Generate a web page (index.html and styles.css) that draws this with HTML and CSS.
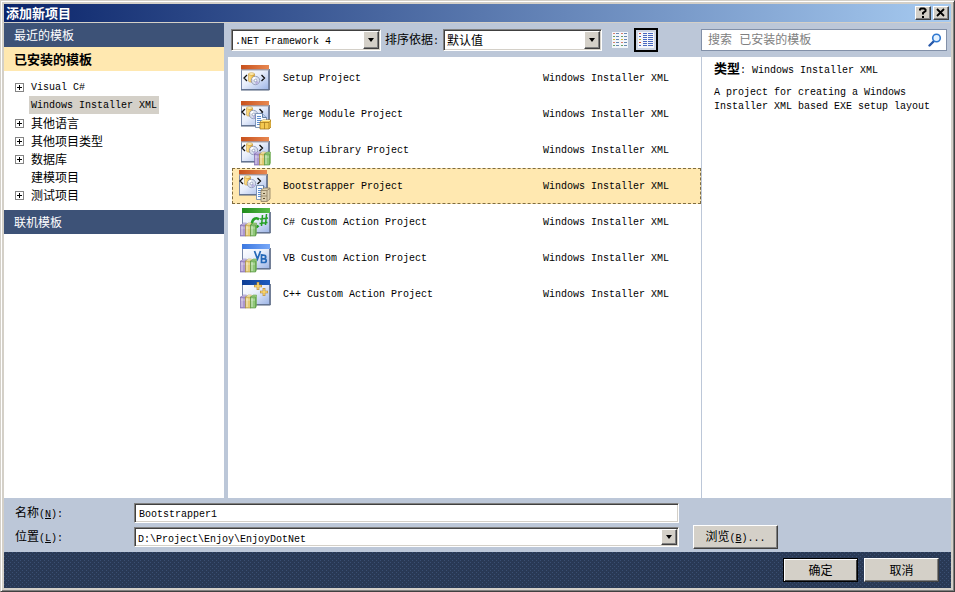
FILE: index.html
```html
<!DOCTYPE html>
<html lang="zh-CN">
<head>
<meta charset="utf-8">
<title>添加新项目</title>
<link rel="stylesheet" href="styles.css">
</head>
<body>
<svg class="defs" aria-hidden="true">
  <defs>
    <linearGradient id="pane" x1="0" y1="0" x2="1" y2="1"><stop offset="0" stop-color="#fff"/><stop offset=".45" stop-color="#e8eefb"/><stop offset="1" stop-color="#9cb4e6"/></linearGradient>
    <linearGradient id="orange"><stop offset="0" stop-color="#c8501c"/><stop offset="1" stop-color="#e88850"/></linearGradient>
    <linearGradient id="green"><stop offset="0" stop-color="#1f8a1c"/><stop offset="1" stop-color="#58bc48"/></linearGradient>
    <linearGradient id="blue"><stop offset="0" stop-color="#3c78e0"/><stop offset="1" stop-color="#78a8f8"/></linearGradient>
    <linearGradient id="navy"><stop offset="0" stop-color="#0c3c94"/><stop offset="1" stop-color="#1c5cc0"/></linearGradient>
    <linearGradient id="gold"><stop offset="0" stop-color="#fce49a"/><stop offset=".6" stop-color="#f4c450"/><stop offset="1" stop-color="#d09828"/></linearGradient>
    <g id="frame">
      <rect x=".5" y="4.500" width="27" height="20" fill="url(#pane)" stroke="#7888a8"/>
      <path d="M0 25h28.300v-21" fill="none" stroke="#50607c"/>
    </g>
    <g id="xml">
      <use href="#frame"/>
      <rect width="28" height="4.500" fill="url(#orange)"/>
      <path d="M0 5h28" stroke="#a4a8b4"/>
    </g>
    <g id="package">
      <path d="M4 1 1 4 4 7M18.500 1 21.500 4 18.500 7" fill="none" stroke="#101010" stroke-width="1.300"/>
      <path d="M5.500 0v7c0 1.500 6 1.500 6 0V0z" fill="url(#gold)" stroke="#c08c28" stroke-width=".5"/>
      <ellipse cx="8.500" cy="0" rx="3" ry="1.300" fill="#fff0b8" stroke="#c08c28" stroke-width=".5"/>
      <circle cx="12.500" cy="6.500" r="4.200" fill="#d8deee" fill-opacity=".95" stroke="#7c88a8" stroke-width=".7"/>
      <path d="M12.500 6.500 9 5a4 4 0 0 1 3.500-2.300z" fill="#fff"/><path d="m12.500 6.500 3.500 1.500a4 4 0 0 1-3.500 2.300z" fill="#b8b0e0"/>
      <circle cx="12.500" cy="6.500" r="1.300" fill="#fff" stroke="#7c88a8" stroke-width=".6"/>
    </g>
    <g id="books">
      <path d="M.5 3.500 3 1h3.500L5.500 3.500z" fill="#d4c8ec" stroke="#8474b0" stroke-width=".5"/>
      <rect x=".5" y="3" width="5" height="11" fill="#ac98d0" stroke="#7460a4" stroke-width=".6"/>
      <path d="M5.500 3.500 8 1h3.500l-1 2.500z" fill="#fff4c0" stroke="#b09840" stroke-width=".5"/>
      <rect x="5.500" y="3" width="5" height="11" fill="#e4cc74" stroke="#a48c38" stroke-width=".6"/>
      <path d="M10.500 3.500 13 1h3.500v11L15.500 14z" fill="#9cd080" stroke="#58983c" stroke-width=".5"/>
      <rect x="10.500" y="3" width="5" height="11" fill="#90c878" stroke="#50903c" stroke-width=".6"/>
      <path d="M2 4v9M7 4v9M12 4v9" stroke="#fff" stroke-opacity=".6"/>
      <path d="M1 6h4M6 6h4M11 6h4" stroke="#fff" stroke-opacity=".4"/>
    </g>
    <g id="sheet">
      <path d="M.5.5h7l4 4v10H.5z" fill="#f8fbff" stroke="#6480a8" stroke-width=".8"/>
      <path d="M7.500.5v4h4" fill="#b8ccec" stroke="#46648c" stroke-width=".8"/>
      <path d="M2 3.500h4M2 5.500h4M2 7.500h7M2 9.500h7M2 11.500h6" stroke="#4880cc" stroke-width=".9"/>
    </g>
  </defs>
</svg>

<div class="window">
  <header class="titlebar">
    <h1>添加新项目</h1>
    <button class="cap" aria-label="帮助"><svg viewBox="0 0 14 12"><path d="M4 3.500V2.500L5 1.500h3l1.500 1v1.500L7 6v1.500M7 9v2" fill="none" stroke="#000" stroke-width="2"/></svg></button>
    <button class="cap" aria-label="关闭"><svg viewBox="0 0 14 12"><path d="m3 2 7 7M10 2 3 9" fill="none" stroke="#000" stroke-width="1.800"/></svg></button>
  </header>

  <main class="content">
    <nav class="sidebar">
      <a class="group" href="#recent">最近的模板</a>
      <a class="group current" href="#installed">已安装的模板</a>
      <ul class="tree">
        <li><button class="plus" aria-label="展开"></button><a href="#cs" class="en">Visual C#</a></li>
        <li><span class="noplus"></span><a href="#wix" class="en picked">Windows Installer XML</a></li>
        <li><button class="plus" aria-label="展开"></button><a href="#lang">其他语言</a></li>
        <li><button class="plus" aria-label="展开"></button><a href="#types">其他项目类型</a></li>
        <li><button class="plus" aria-label="展开"></button><a href="#db">数据库</a></li>
        <li><span class="noplus"></span><a href="#model">建模项目</a></li>
        <li><button class="plus" aria-label="展开"></button><a href="#test">测试项目</a></li>
      </ul>
      <a class="group" href="#online">联机模板</a>
    </nav>

    <section class="browser">
      <div class="toolbar">
        <div class="combo framework"><select class="en" aria-label="框架"><option>.NET Framework 4</option></select><span class="arrow"></span></div>
        <label for="sort">排序依据<span class="en">:</span></label>
        <div class="combo sort"><select id="sort"><option>默认值</option></select><span class="arrow"></span></div>
        <button class="view" aria-label="小图标">
          <svg viewBox="0 0 16 16"><rect width="16" height="16" fill="#f4f6fa"/>
            <path d="M1 1.500h2M1 10.500h2M9 1.500h2M9 10.500h2" stroke="#d88070"/><path d="M1 4.500h2M1 13.500h2M9 4.500h2M9 13.500h2" stroke="#68a068"/><path d="M1 7.500h2M9 7.500h2" stroke="#d0b840"/>
            <path d="M4 1.500h3M4 4.500h3M4 7.500h3M4 10.500h3M4 13.500h3M12 1.500h3M12 4.500h3M12 7.500h3M12 10.500h3M12 13.500h3" stroke="#6888b0"/></svg>
        </button>
        <button class="view on" aria-label="中等图标">
          <svg viewBox="0 0 16 16"><rect width="16" height="16" fill="#f4f6fa"/>
            <path d="M1 1.500h2M1 10.500h2" stroke="#d05040"/><path d="M1 4.500h2M1 13.500h2" stroke="#4868c0"/><path d="M1 7.500h2" stroke="#c8a828"/>
            <path d="M5 1.500h4M5 3.500h4M5 5.500h4M5 7.500h4M5 9.500h4M5 11.500h4M5 13.500h4M10 1.500h5M10 3.500h5M10 5.500h5M10 7.500h5M10 9.500h5M10 11.500h5M10 13.500h5" stroke="#4868c0"/></svg>
        </button>
        <div class="search">
          <input type="search" aria-label="搜索" placeholder="搜索 已安装的模板">
          <svg viewBox="0 0 14 14"><path d="M1.500 12.500 6 8" stroke="#2858a8" stroke-width="2.400" stroke-linecap="round"/><circle cx="8.500" cy="5" r="3.800" fill="#e4f2ff" stroke="#3078d0" stroke-width="1.600"/></svg>
        </div>
      </div>

      <div class="panes">
        <ul class="templates">
          <li>
            <svg viewBox="0 0 32 32"><use href="#xml" x="2" y="3"/><use href="#package" x="4" y="12"/></svg>
            <span class="name">Setup Project</span><span class="kind">Windows Installer XML</span>
          </li>
          <li>
            <svg viewBox="0 0 32 32"><use href="#xml" x="2" y="3"/><use href="#package" x="2" y="10"/><use href="#sheet" x="16" y="15"/>
              <path d="m21 24 3-2h8v7l-2 2h-9z" fill="#f4c850" stroke="#a87c20" stroke-width=".8"/><path d="M21 24.500h9l2-2M25.500 24v7M30 24.500V31" fill="none" stroke="#a87c20" stroke-width=".8"/><path d="m22 23.500 2-1h7" stroke="#fff0a8" fill="none"/></svg>
            <span class="name">Merge Module Project</span><span class="kind">Windows Installer XML</span>
          </li>
          <li>
            <svg viewBox="0 0 32 32"><use href="#xml" x="2" y="3"/><use href="#package" x="2" y="10"/><use href="#books" x="15" y="17"/></svg>
            <span class="name">Setup Library Project</span><span class="kind">Windows Installer XML</span>
          </li>
          <li class="selected">
            <svg viewBox="0 0 32 32"><use href="#xml"/><use href="#package" y="7"/><use href="#sheet" x="17" y="15"/>
              <path d="m22 20 3-2h6v11l-3 2.500h-6z" fill="#dcd0b0" stroke="#8c7c60" stroke-width=".8"/><path d="M22 20.500h6l3-2M28 20.500v11M22 26h6" fill="none" stroke="#8c7c60" stroke-width=".8"/><path d="M24 23.500h2M24 28.500h2" stroke="#605030"/></svg>
            <span class="name">Bootstrapper Project</span><span class="kind">Windows Installer XML</span>
          </li>
          <li>
            <svg viewBox="0 0 32 32"><use href="#frame" x="3" y="2"/><rect x="3" y="2" width="28" height="5" fill="url(#green)"/>
              <g fill="none" stroke="#24a024"><path d="M20 13.500c-3-3-7 0-7 4s4 5 6.500 2" stroke-width="2.600"/><path d="m23.500 9-1 11M27.500 8l-1 11M21 13l8-1M20.500 17.500l8-1" stroke-width="1.500"/></g><use href="#books" x="1" y="16"/></svg>
            <span class="name">C# Custom Action Project</span><span class="kind">Windows Installer XML</span>
          </li>
          <li>
            <svg viewBox="0 0 32 32"><use href="#frame" x="3" y="2"/><rect x="3" y="2" width="28" height="5" fill="url(#blue)"/>
              <path d="m15.500 9 3 8 3-8M22.500 13v7.500h2.500c3 0 3-3.700 0-3.700h-2.500 2c3 0 3-3.700 0-3.700z" fill="none" stroke="#2468b8" stroke-width="1.700"/><use href="#books" x="1" y="16"/></svg>
            <span class="name">VB Custom Action Project</span><span class="kind">Windows Installer XML</span>
          </li>
          <li>
            <svg viewBox="0 0 32 32"><use href="#frame" x="3" y="2"/><rect x="3" y="2" width="28" height="5" fill="url(#navy)"/>
              <g fill="none"><path d="M19 4v8M15 8h8M25 10v8M21 14h8" stroke="#a87c30" stroke-width="2.600"/><path d="M19 4.500v7M15.500 8h7M25 10.500v7M21.500 14h7" stroke="#fcd870" stroke-width="1.500"/></g><use href="#books" x="1" y="16"/></svg>
            <span class="name">C++ Custom Action Project</span><span class="kind">Windows Installer XML</span>
          </li>
        </ul>
        <aside class="details">
          <p class="type"><b>类型</b><span class="en">: Windows Installer XML</span></p>
          <p class="en about">A project for creating a Windows Installer XML based EXE setup layout</p>
        </aside>
      </div>
    </section>
  </main>

  <form class="fields">
    <label for="name">名称<span class="en">(<u>N</u>):</span></label>
    <input id="name" class="en text" type="text" value="Bootstrapper1">
    <label class="second" for="place">位置<span class="en">(<u>L</u>):</span></label>
    <div class="combo place"><select id="place" class="en"><option>D:\Project\Enjoy\EnjoyDotNet</option></select><span class="arrow"></span></div>
    <button type="button" class="push browse">浏览<span class="en">(<u>B</u>)...</span></button>
  </form>

  <footer class="actions">
    <button class="push default">确定</button>
    <button class="push">取消</button>
  </footer>
</div>
</body>
</html>
```
FILE: styles.css
```css
:root {
  --face: #d4d0c8;
  --band: #bcc7d8;
  --header: #3d5277;
  --pick: #ffe8b0;
}

* { box-sizing: border-box; }

body {
  margin: 0;
  font: 12px/18px "Noto Sans CJK SC", sans-serif;
  color: #000;
}

h1, p, ul { margin: 0; padding: 0; }
ul { list-style: none; }
a { color: inherit; text-decoration: none; }
button, input, select { font: inherit; color: inherit; margin: 0; padding: 0; border: 0; border-radius: 0; outline: 0; }
svg { display: block; }
.defs { position: absolute; width: 0; height: 0; }

.en, .name, .kind { font-family: "Liberation Mono", monospace; font-size: 10px; }

.window {
  display: flex;
  flex-direction: column;
  min-height: 100vh;
  border: 1px solid;
  border-color: var(--face) #404040 #404040 var(--face);
  box-shadow: inset 1px 1px #fff, inset -1px -1px #808080;
  background: var(--face);
  padding: 3px;
}

.titlebar {
  display: flex;
  align-items: center;
  gap: 2px;
  height: 18px;
  margin-bottom: 1px;
  padding: 0 2px;
  background: linear-gradient(90deg, #0a246a, #a6caf0);
}
.titlebar h1 { flex: 1; font-size: 13px; line-height: 18px; color: #fff; }
.cap {
  width: 16px;
  height: 14px;
  background: var(--face);
  border: 1px solid;
  border-color: #fff #404040 #404040 #fff;
  box-shadow: inset -1px -1px #808080;
}
.cap svg { width: 14px; height: 12px; }

.content { flex: 1; display: flex; background: var(--band); }

.sidebar { width: 220px; background: #fff; }
.group { display: block; padding: 0 10px; line-height: 24px; background: var(--header); color: #fff; }
.group.current { background: var(--pick); color: #000; font-size: 13px; font-weight: bold; }
.tree { padding: 7px 0 6px 11px; }
.tree li { display: flex; align-items: center; gap: 5px; height: 18px; }
.tree a { padding: 0 2px; line-height: 18px; }
.tree a.en { padding-top: 2px; line-height: 16px; }
.tree a.picked { background: var(--face); }
.plus, .noplus { width: 9px; height: 9px; }
.plus {
  border: 1px solid #848484;
  background:
    linear-gradient(#000, #000) center / 5px 1px no-repeat,
    linear-gradient(#000, #000) center / 1px 5px no-repeat,
    #fff;
}

.browser { flex: 1; display: flex; flex-direction: column; margin-left: 4px; }
.toolbar { display: flex; align-items: center; height: 34px; padding: 0 4px 0 3px; }
.toolbar label { margin: 0 4px; white-space: nowrap; }

.combo {
  display: flex;
  height: 22px;
  background: #fff;
  border: 1px solid;
  border-color: #808080 #fff #fff #808080;
  box-shadow: inset 1px 1px #404040, inset -1px -1px var(--face);
  padding: 1px;
  position: relative;
}
.combo select { appearance: none; flex: 1; min-width: 0; padding: 0 18px 0 2px; background: transparent; }
.combo select.en { padding-top: 2px; }
.arrow {
  position: absolute;
  top: 1px;
  right: 1px;
  bottom: 1px;
  width: 16px;
  pointer-events: none;
  background: var(--face);
  border: 1px solid;
  border-color: #fff #404040 #404040 #fff;
  box-shadow: inset -1px -1px #808080;
  display: grid;
  place-items: center;
}
.arrow::before { content: ""; border: 3px solid transparent; border-top: 4px solid #000; border-bottom: 0; }
.framework { width: 150px; }
.sort { width: 159px; }

.view { display: grid; place-items: center; width: 24px; height: 24px; margin-left: 6px; background: none; }
.view + .view { margin-left: 2px; }
.view svg { width: 16px; height: 16px; }
.view.on { border: 2px solid #000; background: #cdd5e4; }

.search {
  display: flex;
  align-items: center;
  width: 246px;
  height: 22px;
  margin-left: auto;
  padding: 0 4px 0 6px;
  background: #fff;
  border: 1px solid #8290a8;
}
.search input { flex: 1; min-width: 0; padding-top: 2px; background: none; font-family: "Liberation Mono", "Noto Sans CJK SC", monospace; }
.search input::placeholder { color: #808080; opacity: 1; }
.search svg { width: 14px; height: 14px; }

.panes { flex: 1; display: flex; background: #fff; }
.templates { flex: 1; padding: 3px 0 0 4px; }
.templates li { display: flex; align-items: center; height: 36px; padding: 0 0 0 6px; border: 1px dashed transparent; }
.templates li.selected { background: var(--pick); border-color: #806c40; }
.templates svg { width: 32px; height: 32px; }
.name, .kind { padding-top: 2px; }
.name { flex: 1; margin-left: 12px; }
.kind { width: 157px; }

.details { width: 250px; padding: 2px 12px; border-left: 1px solid var(--band); }
.type b { font-size: 13px; }
.about { margin-top: 6px; line-height: 14px; }

.fields {
  display: grid;
  grid-template-columns: 119px minmax(0, 1fr) 85px;
  grid-template-rows: 20px 24px;
  row-gap: 2px;
  align-items: center;
  padding: 5px 173px 3px 11px;
  background: var(--band);
}
.text {
  height: 20px;
  margin-right: 14px;
  padding: 2px 4px 0;
  background: #fff;
  border: 1px solid;
  border-color: #808080 #fff #fff #808080;
  box-shadow: inset 1px 1px #404040, inset -1px -1px var(--face);
}
.second { grid-column: 1; }
.place { height: 20px; margin-right: 14px; }

.push {
  height: 24px;
  background: var(--face);
  border: 1px solid;
  border-color: #fff #404040 #404040 #fff;
  box-shadow: inset -1px -1px #808080;
  line-height: 18px;
}

.actions {
  display: flex;
  align-items: center;
  justify-content: flex-end;
  gap: 6px;
  height: 36px;
  padding-right: 12px;
  background:
    linear-gradient(#35496a, #35496a) 0 0 / 0 0,
    conic-gradient(from 270deg at 1px 1px, #3a4f72 90deg, transparent 0) 0 0 / 4px 4px,
    conic-gradient(from 270deg at 1px 1px, #3a4f72 90deg, transparent 0) 2px 2px / 4px 4px,
    #293955;
}
.actions .push { width: 75px; }
.actions .default { border-color: #000; box-shadow: inset 1px 1px #fff, inset -1px -1px #404040; }
```
